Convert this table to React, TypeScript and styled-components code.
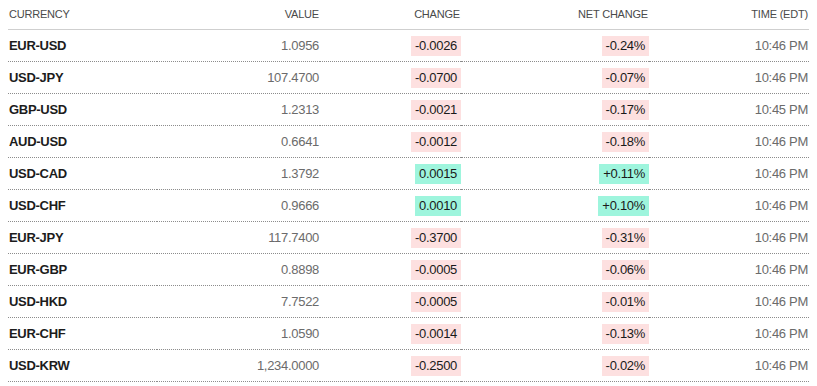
import React from 'react';
import styled, { createGlobalStyle } from 'styled-components';

const GlobalStyle = createGlobalStyle`
  body {
    margin: 0 8px;
    background: #fff;
    font-family: "Liberation Sans", Arial, sans-serif;
  }
`;

const Table = styled.div`
  width: 801px;
`;

const Row = styled.div`
  display: grid;
  grid-template-columns: 149px 163px 141px 188px 160px;
  align-items: center;
  height: 32px;
`;

const HeaderRow = styled(Row)`
  height: 30px;
  border-bottom: 1px solid #cfcfcf;
  box-sizing: border-box;
`;

const HeadCell = styled.div<{ $left?: boolean }>`
  font-size: 11px;
  color: #4a4a4a;
  text-transform: uppercase;
  letter-spacing: -0.2px;
  text-align: ${p => (p.$left ? 'left' : 'right')};
  padding: 0 1px;
  margin-top: -2px;
`;

const Cell = styled.div<{ $left?: boolean }>`
  height: 100%;
  box-sizing: border-box;
  border-bottom: 1px dotted #8c8c8c;
  display: flex;
  align-items: center;
  justify-content: ${p => (p.$left ? 'flex-start' : 'flex-end')};
  padding: 0 1px;
  font-size: 13px;
  letter-spacing: -0.3px;
  color: #6b6b6b;
`;

const Pair = styled.span`
  font-weight: bold;
  color: #1c1c1c;
  font-size: 13px;
`;

const Badge = styled.span<{ $up: boolean }>`
  display: inline-block;
  height: 20px;
  line-height: 20px;
  padding: 0 4px;
  background: ${p => (p.$up ? '#9ef5dd' : '#fde0e0')};
  color: #1a1a1a;
  margin-right: -1px;
`;

type Quote = { pair: string; value: string; change: string; net: string; time: string };

const quotes: Quote[] = [
  { pair: 'EUR-USD', value: '1.0956', change: '-0.0026', net: '-0.24%', time: '10:46 PM' },
  { pair: 'USD-JPY', value: '107.4700', change: '-0.0700', net: '-0.07%', time: '10:46 PM' },
  { pair: 'GBP-USD', value: '1.2313', change: '-0.0021', net: '-0.17%', time: '10:45 PM' },
  { pair: 'AUD-USD', value: '0.6641', change: '-0.0012', net: '-0.18%', time: '10:46 PM' },
  { pair: 'USD-CAD', value: '1.3792', change: '0.0015', net: '+0.11%', time: '10:46 PM' },
  { pair: 'USD-CHF', value: '0.9666', change: '0.0010', net: '+0.10%', time: '10:46 PM' },
  { pair: 'EUR-JPY', value: '117.7400', change: '-0.3700', net: '-0.31%', time: '10:46 PM' },
  { pair: 'EUR-GBP', value: '0.8898', change: '-0.0005', net: '-0.06%', time: '10:46 PM' },
  { pair: 'USD-HKD', value: '7.7522', change: '-0.0005', net: '-0.01%', time: '10:46 PM' },
  { pair: 'EUR-CHF', value: '1.0590', change: '-0.0014', net: '-0.13%', time: '10:46 PM' },
  { pair: 'USD-KRW', value: '1,234.0000', change: '-0.2500', net: '-0.02%', time: '10:46 PM' },
];

const App: React.FC = () => {
  return (
    <>
      <GlobalStyle />
      <Table>
        <HeaderRow>
          <HeadCell $left>Currency</HeadCell>
          <HeadCell>Value</HeadCell>
          <HeadCell>Change</HeadCell>
          <HeadCell>Net Change</HeadCell>
          <HeadCell>Time (EDT)</HeadCell>
        </HeaderRow>
        {quotes.map(q => {
          const up = !q.change.startsWith('-');
          return (
            <Row key={q.pair}>
              <Cell $left><Pair>{q.pair}</Pair></Cell>
              <Cell>{q.value}</Cell>
              <Cell><Badge $up={up}>{q.change}</Badge></Cell>
              <Cell><Badge $up={up}>{q.net}</Badge></Cell>
              <Cell>{q.time}</Cell>
            </Row>
          );
        })}
      </Table>
    </>
  );
};

export default App;
